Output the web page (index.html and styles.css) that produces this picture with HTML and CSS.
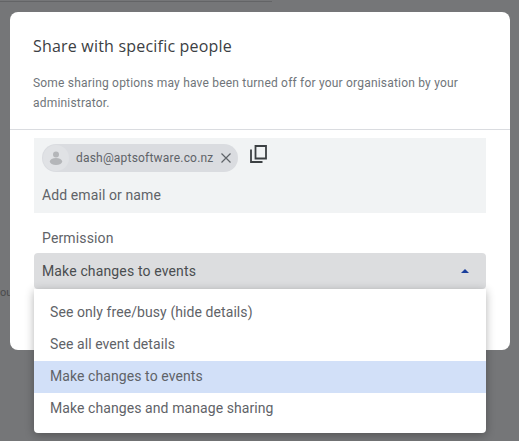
FILE: index.html
```html
<!DOCTYPE html>
<html lang="en">
<head>
    <meta charset="UTF-8">
    <title>Share with specific people</title>
    <link rel="stylesheet" href="styles.css">
</head>
<body>
    <div class="page-line"></div>
    <div class="page-text">ou</div>
    <div class="dialog">
        <h1>Share with specific people</h1>
        <p class="note">Some sharing options may have been turned off for your organisation by your administrator.</p>
        <div class="divider"></div>
        <div class="recipients">
            <div class="chip-row">
                <div class="chip">
                    <span class="avatar">
                        <svg width="16" height="16" viewBox="0 0 16 16"><circle cx="8" cy="4.5" r="3" fill="#b4b6b9"/><ellipse cx="8" cy="11.5" rx="6.2" ry="3.5" fill="#b4b6b9"/></svg>
                    </span>
                    <span class="chip-text">dash@aptsoftware.co.nz</span>
                    <svg class="chip-close" width="10" height="10" viewBox="0 0 10 10"><path d="M0.5 0.5L9.5 9.5M9.5 0.5L0.5 9.5" stroke="#5f6368" stroke-width="1.2"/></svg>
                </div>
                <svg class="copy-icon" width="17" height="18" viewBox="0 0 17 18"><path d="M5.5 1h10.5v12.5h-10.5zM1 4.5v12.500h11.500" fill="none" stroke="#3c4043" stroke-width="1.800"/></svg>
            </div>
            <div class="add-input">Add email or name</div>
        </div>
        <div class="perm-label">Permission</div>
        <div class="select">
            <span>Make changes to events</span>
            <span class="arrow"></span>
        </div>
    </div>
    <ul class="menu">
        <li>See only free/busy (hide details)</li>
        <li>See all event details</li>
        <li class="selected">Make changes to events</li>
        <li>Make changes and manage sharing</li>
    </ul>
</body>
</html>
```

FILE: styles.css
```css
* {
    box-sizing: border-box;
}

body {
    margin: 0;
    height: 441px;
    padding: 12px 9px 0 10px;
    overflow: hidden;
    position: relative;
    background-color: #757678;
    font-family: Roboto, sans-serif;
    color: #5f6368;
}

.page-line {
    position: absolute;
    top: 1px;
    left: 0;
    width: 272px;
    height: 1px;
    background-color: #636466;
}

.page-text {
    position: absolute;
    top: 286px;
    left: 0;
    font-size: 11px;
    color: #4a4b4d;
}

.dialog {
    position: relative;
    height: 338px;
    background-color: #fff;
    border-radius: 8px;
    padding: 0 24px;
}

h1 {
    margin: 0;
    margin-left: -1px;
    padding-top: 24px;
    font-family: "Open Sans", sans-serif;
    font-size: 16px;
    line-height: 20px;
    font-weight: 500;
    letter-spacing: 0.2px;
    color: #3c4043;
}

.note {
    margin: 17px 0 0 -1px;
    font-size: 12px;
    line-height: 20px;
    letter-spacing: 0.2px;
    color: #70757a;
}

.divider {
    height: 1px;
    margin: 16px -24px 8px;
    background-color: #dadce0;
}

.recipients {
    height: 75px;
    background-color: #f1f3f4;
    padding: 6px 8px 0;
}

.chip-row {
    display: flex;
    align-items: flex-start;
}

.chip {
    display: flex;
    align-items: center;
    height: 28px;
    width: 196px;
    border-radius: 14px;
    background-color: #dadce0;
}

.avatar {
    display: flex;
    align-items: center;
    justify-content: center;
    width: 26px;
    height: 26px;
    margin-left: 1px;
    border-radius: 50%;
    background-color: #e0e2e5;
}

.chip-text {
    margin-left: 7px;
    font-size: 12px;
    letter-spacing: 0.2px;
    color: #5f6368;
}

.chip-close {
    margin-left: 7px;
}

.copy-icon {
    margin: 1px 0 0 12px;
}

.add-input {
    margin-top: 13px;
    font-size: 14px;
    line-height: 20px;
    letter-spacing: 0.1px;
    color: #5f6368;
}

.perm-label {
    margin: 15px 0 0 8px;
    font-size: 14px;
    line-height: 20px;
    letter-spacing: 0.14px;
    color: #5f6368;
}

.select {
    display: flex;
    align-items: center;
    justify-content: space-between;
    height: 36px;
    margin-top: 5px;
    padding: 0 17px 0 8px;
    border-radius: 4px;
    background-color: #dcdddf;
    font-size: 14px;
    letter-spacing: 0.14px;
    color: #4a4d50;
}

.arrow {
    width: 0;
    height: 0;
    border-left: 4px solid transparent;
    border-right: 4px solid transparent;
    border-bottom: 4px solid #1a3f9c;
}

.menu {
    position: absolute;
    top: 289px;
    left: 34px;
    width: 452px;
    margin: 0;
    padding: 8px 0;
    list-style: none;
    background-color: #fff;
    border-radius: 0 0 4px 4px;
    box-shadow: 0 2px 10px rgba(0, 0, 0, 0.3);
}

.menu li {
    height: 32px;
    padding-left: 16px;
    font-size: 14px;
    line-height: 30px;
    letter-spacing: 0.08px;
    color: #5f6368;
}

.menu .selected {
    background-color: #d2e0f8;
}
```
